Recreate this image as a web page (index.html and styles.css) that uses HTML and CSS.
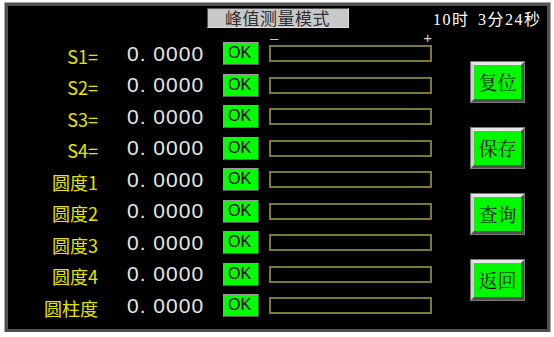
FILE: index.html
```html
<!DOCTYPE html>
<html lang="zh">
<head>
<meta charset="utf-8">
<title>峰值测量模式</title>
<link rel="stylesheet" href="styles.css">
</head>
<body>
<div class="panel">
  <div class="header">
    <div class="title">峰值测量模式</div>
    <div class="clock">10时 3分24秒</div>
  </div>
  <div class="body">
    <div class="rows">
      <div class="row"><span class="label">S1=</span><span class="value">0. 0000</span><span class="ok">OK</span><span class="barcell"><span class="scale"><span>–</span><span>+</span></span><span class="bar"></span></span></div>
      <div class="row"><span class="label">S2=</span><span class="value">0. 0000</span><span class="ok">OK</span><span class="barcell"><span class="bar"></span></span></div>
      <div class="row"><span class="label">S3=</span><span class="value">0. 0000</span><span class="ok">OK</span><span class="barcell"><span class="bar"></span></span></div>
      <div class="row"><span class="label">S4=</span><span class="value">0. 0000</span><span class="ok">OK</span><span class="barcell"><span class="bar"></span></span></div>
      <div class="row"><span class="label">圆度1</span><span class="value">0. 0000</span><span class="ok">OK</span><span class="barcell"><span class="bar"></span></span></div>
      <div class="row"><span class="label">圆度2</span><span class="value">0. 0000</span><span class="ok">OK</span><span class="barcell"><span class="bar"></span></span></div>
      <div class="row"><span class="label">圆度3</span><span class="value">0. 0000</span><span class="ok">OK</span><span class="barcell"><span class="bar"></span></span></div>
      <div class="row"><span class="label">圆度4</span><span class="value">0. 0000</span><span class="ok">OK</span><span class="barcell"><span class="bar"></span></span></div>
      <div class="row"><span class="label">圆柱度</span><span class="value">0. 0000</span><span class="ok">OK</span><span class="barcell"><span class="bar"></span></span></div>
    </div>
    <div class="side">
      <div class="btn">复位</div>
      <div class="btn">保存</div>
      <div class="btn">查询</div>
      <div class="btn">返回</div>
    </div>
  </div>
</div>
</body>
</html>
```

FILE: styles.css
```css
html, body {
  margin: 0;
  padding: 0;
  background: #ffffff;
}

.panel {
  margin: 3px 0 0 5px;
  width: 545px;
  height: 329px;
  box-sizing: border-box;
  background: #000000;
  border: 3px solid #505050;
  box-shadow: 0 0 0 1px #a8a8a8;
  display: flex;
  flex-direction: column;
}

.header {
  height: 31.75px;
  flex: none;
  position: relative;
  display: flex;
  justify-content: center;
  align-items: flex-start;
  padding-top: 2px;
  box-sizing: border-box;
}

.title {
  width: 142px;
  height: 20px;
  box-sizing: border-box;
  background: #c8c8c8;
  border: 1px solid #555555;
  border-right-color: #e0e0e0;
  border-bottom-color: #e0e0e0;
  color: #303030;
  font-family: "Noto Sans CJK SC", sans-serif;
  font-size: 17px;
  line-height: 18px;
  text-align: center;
  letter-spacing: 0.5px;
}

.clock {
  position: absolute;
  left: 425px;
  top: 3px;
  color: #ffffff;
  font-family: "Liberation Serif", "Noto Sans CJK SC", serif;
  font-size: 16px;
  word-spacing: 3px;
  letter-spacing: 1.5px;
  line-height: 22px;
  white-space: pre;
}

.body {
  flex: 1;
  display: flex;
}

.rows {
  width: 440px;
  flex: none;
  display: grid;
  grid-template-columns: 90px 125px 36px 173px;
  grid-auto-rows: 31.5px;
  align-content: start;
}

.row {
  display: contents;
}

.label {
  align-self: center;
  text-align: right;
  color: #e4e400;
  font-family: "Noto Sans CJK SC", sans-serif;
  font-size: 18px;
  line-height: 22px;
  position: relative;
  top: 2px;
  white-space: nowrap;
}

.value {
  align-self: center;
  padding-left: 29px;
  color: #e6e6e6;
  font-family: "Liberation Sans", sans-serif;
  font-size: 21px;
  letter-spacing: 1px;
  line-height: 22px;
  white-space: pre;
}

.ok {
  align-self: center;
  height: 23px;
  box-sizing: border-box;
  background: #00ff00;
  border: 1px solid #9a9a9a;
  border-right-color: #5a5a5a;
  border-bottom-color: #5a5a5a;
  color: #000000;
  font-family: "Liberation Sans Narrow", "Liberation Sans", sans-serif;
  font-size: 16px;
  line-height: 20px;
  padding-left: 4px;
}

.barcell {
  align-self: center;
  margin-left: 10px;
  width: 163px;
  position: relative;
  display: block;
  height: 17px;
}

.bar {
  display: block;
  width: 163px;
  height: 17px;
  box-sizing: border-box;
  border: 2px solid #7a783a;
}

.scale {
  position: absolute;
  left: 1px;
  right: 0;
  top: -13px;
  display: flex;
  justify-content: space-between;
  color: #d0d0d0;
  font-family: "Liberation Sans", sans-serif;
  font-size: 15px;
  line-height: 12px;
}

.side {
  flex: 1;
  display: flex;
  flex-direction: column;
  align-items: center;
  padding-top: 24px;
  gap: 26px;
}

.btn {
  width: 53px;
  height: 40px;
  box-sizing: border-box;
  background: #00f800;
  border: 3px solid;
  border-color: #e8e8e8 #505050 #505050 #d0d0d0;
  box-shadow: 0 0 0 1px #7a7a7a;
  color: #101010;
  font-family: "Noto Serif CJK SC", "Noto Sans CJK SC", serif;
  font-size: 19px;
  line-height: 34px;
  text-align: center;
}
```
